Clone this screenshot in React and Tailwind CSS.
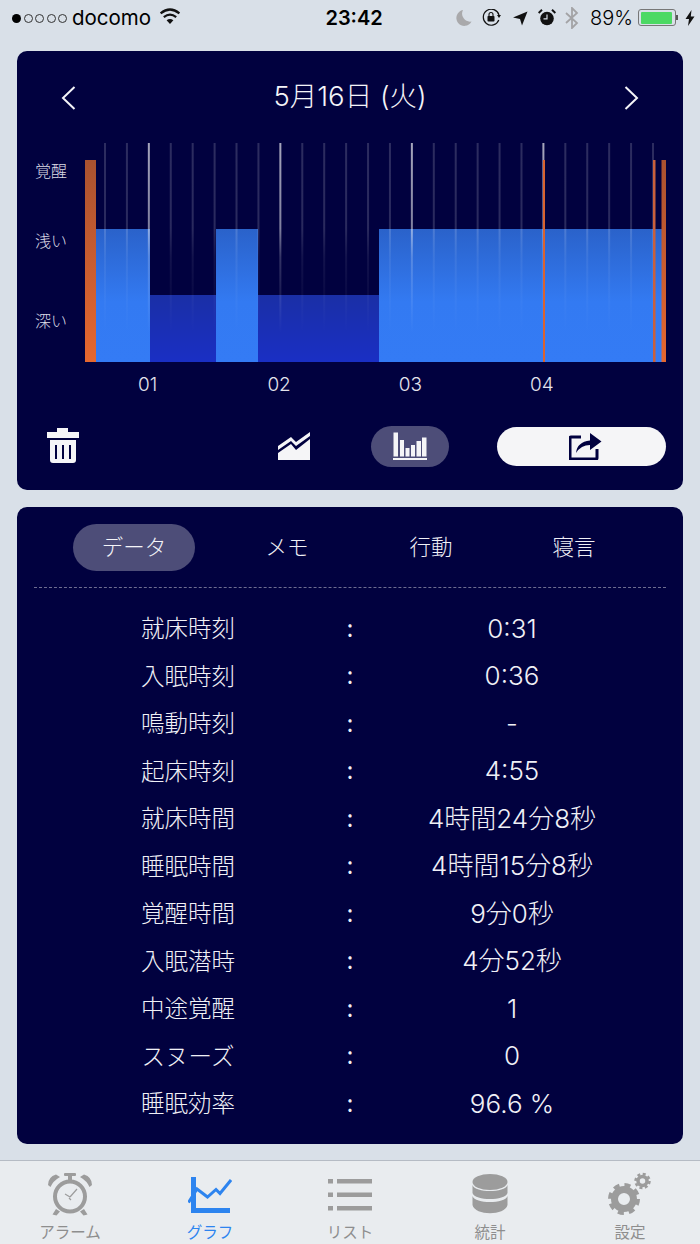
import React from "react";

const FONT = { fontFamily: '"Inter", "Noto Sans CJK JP", sans-serif' };

const ROWS = [
  ["就床時刻", "0:31"],
  ["入眠時刻", "0:36"],
  ["鳴動時刻", "-"],
  ["起床時刻", "4:55"],
  ["就床時間", "4時間24分8秒"],
  ["睡眠時間", "4時間15分8秒"],
  ["覚醒時間", "9分0秒"],
  ["入眠潜時", "4分52秒"],
  ["中途覚醒", "1"],
  ["スヌーズ", "0"],
  ["睡眠効率", "96.6 %"],
];

const GRID_X = Array.from({ length: 26 }, (_, i) => 20 + i * 21.92);

function SleepChart() {
  return (
    <svg width="581" height="219" viewBox="0 0 581 219" className="block">
      <defs>
        <linearGradient id="light" x1="0" y1="86" x2="0" y2="219" gradientUnits="userSpaceOnUse">
          <stop offset="0" stopColor="#2a62ca" />
          <stop offset="0.55" stopColor="#337af2" />
          <stop offset="1" stopColor="#347bf5" />
        </linearGradient>
        <linearGradient id="deep" x1="0" y1="152" x2="0" y2="219" gradientUnits="userSpaceOnUse">
          <stop offset="0" stopColor="#1a2fa6" />
          <stop offset="1" stopColor="#1a2fc4" />
        </linearGradient>
        <linearGradient id="awake" x1="0" y1="17" x2="0" y2="219" gradientUnits="userSpaceOnUse">
          <stop offset="0" stopColor="#aa5230" />
          <stop offset="1" stopColor="#e6672f" />
        </linearGradient>
        <linearGradient id="dim" x1="0" y1="0" x2="0" y2="190" gradientUnits="userSpaceOnUse">
          <stop offset="0" stopColor="#fff" stopOpacity="0.17" />
          <stop offset="0.45" stopColor="#fff" stopOpacity="0.16" />
          <stop offset="0.6" stopColor="#fff" stopOpacity="0.07" />
          <stop offset="1" stopColor="#fff" stopOpacity="0" />
        </linearGradient>
        <linearGradient id="bright" x1="0" y1="0" x2="0" y2="190" gradientUnits="userSpaceOnUse">
          <stop offset="0" stopColor="#fff" stopOpacity="0.65" />
          <stop offset="0.45" stopColor="#fff" stopOpacity="0.5" />
          <stop offset="0.6" stopColor="#fff" stopOpacity="0.2" />
          <stop offset="1" stopColor="#fff" stopOpacity="0" />
        </linearGradient>
      </defs>
      <rect x="11" y="86" width="54" height="133" fill="url(#light)" />
      <rect x="65" y="152" width="66" height="67" fill="url(#deep)" />
      <rect x="131" y="86" width="42" height="133" fill="url(#light)" />
      <rect x="173" y="152" width="121" height="67" fill="url(#deep)" />
      <rect x="294" y="86" width="287" height="133" fill="url(#light)" />
      {GRID_X.map((x, i) => (
        <rect
          key={x}
          x={x - 1}
          y="0"
          width="2"
          height="190"
          fill={i % 6 === 2 ? "url(#bright)" : "url(#dim)"}
        />
      ))}
      <rect x="0" y="17" width="11" height="202" fill="url(#awake)" />
      <rect x="458" y="17" width="2" height="202" fill="#d9632f" />
      <rect x="568" y="17" width="2.5" height="202" fill="#c9603c" />
      <rect x="576.5" y="17" width="4.5" height="202" fill="url(#awake)" />
    </svg>
  );
}

function StatusBar() {
  return (
    <div className="h-[51px] flex items-start pt-[6px] text-black text-[20px] relative">
      <div className="flex items-center h-[24px] pl-[12px] gap-[2.5px]">
        <span className="w-[9px] h-[9px] rounded-full bg-black" />
        {[0, 1, 2, 3].map((i) => (
          <span key={i} className="w-[9px] h-[9px] rounded-full border border-[#333]" />
        ))}
      </div>
      <span className="ml-[5px] leading-[24px] text-[20.5px]">docomo</span>
      <svg width="22" height="17" viewBox="0 0 22 17" className="ml-[8px] mt-[2px]">
        <path d="M11 16 L7.6 12.2 Q11 9.6 14.4 12.2 Z" fill="#111" />
        <path d="M4.8 9.2 Q11 4.2 17.2 9.2" fill="none" stroke="#111" strokeWidth="2.2" />
        <path d="M1.6 5.4 Q11 -2.4 20.4 5.4" fill="none" stroke="#111" strokeWidth="2.2" />
      </svg>
      <span className="ml-[144px] leading-[24px] font-semibold text-[20px] w-[58px] text-center">23:42</span>
      <svg width="17" height="16" viewBox="0 0 17 16" className="ml-[72px] mt-[4px]">
        <path d="M8 0 A8 8 0 1 0 16.5 11.5 A8 8 0 0 1 8 0 Z" fill="#a9a9ab" />
      </svg>
      <svg width="20" height="17" viewBox="0 0 20 17" className="ml-[10px] mt-[3px]">
        <path d="M16.8 11 A8 8 0 1 1 17 6" fill="none" stroke="#111" strokeWidth="1.2" />
        <path d="M15 6 L19 6 L17 9 Z" fill="#111" />
        <rect x="5.5" y="7" width="7" height="5.5" rx="0.8" fill="#111" />
        <path d="M7 7 V5.5 A2 2 0 0 1 11 5.5 V7" fill="none" stroke="#111" strokeWidth="1.1" />
      </svg>
      <svg width="15" height="15" viewBox="0 0 15 15" className="ml-[11px] mt-[5px]">
        <path d="M14.5 0.5 L0 6.5 L7 8 L9 14.5 Z" fill="#111" />
      </svg>
      <svg width="18" height="17" viewBox="0 0 18 17" className="ml-[10px] mt-[3px]">
        <circle cx="9" cy="9.5" r="6.8" fill="#111" />
        <path d="M9 5.5 V9.8 H5.5" fill="none" stroke="#d9e0e8" strokeWidth="1.2" />
        <path d="M0.6 4 L4 0.8 M17.4 4 L14 0.8" stroke="#111" strokeWidth="2" />
      </svg>
      <svg width="14" height="22" viewBox="0 0 14 22" className="ml-[9px] mt-[1px]">
        <path d="M1 6 L12 16 L7 21 V1 L12 6 L1 16" fill="none" stroke="#a3a3a5" strokeWidth="1.8" />
      </svg>
      <span className="ml-[11px] leading-[24px] text-[20px] font-light">89%</span>
      <div className="ml-[5px] mt-[3px] w-[38px] h-[17px] rounded-[3px] border border-[#777] p-[1.5px]">
        <div className="h-full w-[31px] rounded-[1px] bg-[#4cd964]" />
      </div>
      <span className="mt-[9px] w-[2px] h-[5px] bg-[#555]" />
      <svg width="10" height="16" viewBox="0 0 10 16" className="ml-[7px] mt-[4px]">
        <path d="M6.5 0 L0.5 9 H4 L3 16 L9.5 6.5 H5.8 Z" fill="#111" />
      </svg>
    </div>
  );
}

function Card1() {
  return (
    <div className="mx-[17px] h-[439px] rounded-[10px] bg-[#01013f]">
      <div className="h-[92px] flex items-center justify-between px-[44px] pt-[1px] text-[#f4f4f8]">
        <svg width="15" height="24" viewBox="0 0 15 24">
          <path d="M13.5 1 L2 12 L13.5 23" fill="none" stroke="currentColor" strokeWidth="2" />
        </svg>
        <span className="text-[27.5px] font-light mt-[-1px] leading-none">5月16日 (火)</span>
        <svg width="15" height="24" viewBox="0 0 15 24">
          <path d="M1.5 1 L13 12 L1.5 23" fill="none" stroke="currentColor" strokeWidth="2" />
        </svg>
      </div>

      <div className="flex">
        <div className="w-[68px] h-[219px] flex flex-col items-center text-[16px] text-[#dcdce6] font-light leading-[22px]">
          <span className="mt-[17px]">覚醒</span>
          <span className="mt-[48px]">浅い</span>
          <span className="mt-[58px]">深い</span>
        </div>
        <SleepChart />
      </div>

      <div className="flex pl-[65px] mt-[10px] h-[26px] items-center text-[19px] font-light text-[#e4e4ec]">
        {["01", "02", "03", "04"].map((t) => (
          <span key={t} className="w-[131.4px] text-center">
            {t}
          </span>
        ))}
      </div>

      <div className="flex items-center h-[48px] mt-[24px]">
        <svg width="32" height="36" viewBox="0 0 32 36" className="ml-[30px]">
          <path d="M10 0 H21 V4 H32 V10 H0 V4 H10 Z" fill="#f5f5f7" />
          <path
            d="M3 12 H29 V32 Q29 35 26 35 H6 Q3 35 3 32 Z M8 17 V31 H10 V17 Z M15 17 V31 H17 V17 Z M22 17 V31 H24 V17 Z"
            fill="#f5f5f7"
            fillRule="evenodd"
          />
        </svg>
        <svg width="32" height="28" viewBox="0 0 32 28" className="ml-[199px]">
          <path d="M0 14 L13 5 L18 10 L32 0 V4 L18 14 L13 9 L0 18 Z" fill="#f5f5f7" />
          <path d="M0 21 L13 12 L18 18 L32 7 V28 H0 Z" fill="#f5f5f7" />
        </svg>
        <div className="ml-[61px] w-[78px] h-[41px] rounded-full bg-[#4d4d78] flex items-center justify-center">
          <svg width="34" height="28" viewBox="0 0 34 28">
            <g fill="#f5f5f7">
              <rect x="0.5" y="0.5" width="4.5" height="24" />
              <rect x="7" y="8" width="4" height="16.5" />
              <rect x="12.5" y="16" width="4" height="8.5" />
              <rect x="18" y="13" width="4" height="11.5" />
              <rect x="23.5" y="9" width="4.5" height="15.5" />
              <rect x="29" y="5.5" width="4.5" height="19" />
              <rect x="0" y="26" width="34" height="2" />
            </g>
          </svg>
        </div>
        <div className="ml-[48px] w-[169px] h-[39px] rounded-full bg-[#f5f5f7] flex items-center justify-center">
          <svg width="33" height="28" viewBox="0 0 33 28" className="ml-[7px]">
            <path
              d="M12 5 H2 Q1 5 1 6 V26 Q1 27 2 27 H27 Q28 27 28 26 V17"
              fill="none"
              stroke="#01013f"
              strokeWidth="3"
            />
            <path
              d="M7 21 Q8 10 21 8.5 V1 L32.5 9.5 L21 18 V13 Q12 13 7 21 Z"
              fill="#01013f"
            />
          </svg>
        </div>
      </div>
    </div>
  );
}

function Card2() {
  return (
    <div className="mx-[17px] mt-[17px] h-[637px] rounded-[10px] bg-[#01013f] px-[17px] text-[#f0f0f6] font-light">
      <div className="h-[81px] flex items-center text-[21.5px] border-b border-dashed border-[#6d6d90]">
        <div className="ml-[39px] w-[122px] h-[47px] rounded-full bg-[#4d4d78] flex items-center justify-center text-[#f4f4f8]">
          データ
        </div>
        <span className="ml-[62px] w-[60px] text-center">メモ</span>
        <span className="ml-[84px] w-[60px] text-center">行動</span>
        <span className="ml-[83px] w-[60px] text-center">寝言</span>
      </div>
      <div className="pt-[17px]">
        {ROWS.map(([label, value]) => (
          <div
            key={label}
            className="grid grid-cols-[308px_16px_308px] h-[47.5px] items-center text-[23.5px] leading-none"
          >
            <span className="text-center">{label}</span>
            <span className="text-center text-[24px] font-normal">:</span>
            <span className="text-center text-[26px]">{value}</span>
          </div>
        ))}
      </div>
    </div>
  );
}

function AlarmIcon() {
  return (
    <svg width="46" height="43" viewBox="0 0 46 43" fill="#9c9c9c">
      <circle cx="23" cy="23.5" r="15" fill="none" stroke="#9c9c9c" strokeWidth="4" />
      <path d="M1 12 Q1 4 9 1.5 L13 4 Q6 8 3.5 14 Z" />
      <path d="M45 12 Q45 4 37 1.5 L33 4 Q40 8 42.5 14 Z" />
      <rect x="17" y="0" width="12" height="3" rx="1" />
      <rect x="21" y="2" width="4" height="5" />
      <path d="M9 36 L5.5 41.5 L9.5 42.5 L13 38.5 Z M37 36 L40.5 41.5 L36.5 42.5 L33 38.5 Z" />
      <path d="M23 24 L30 16 M23 24 L18 21 M22 25 L24 27" fill="none" stroke="#9c9c9c" strokeWidth="1.2" />
    </svg>
  );
}

function GraphIcon() {
  return (
    <svg width="44" height="37" viewBox="0 0 44 37">
      <path d="M3 0 H8 V31 H42 V36 H3 V24 H3 Z" fill="#2d84ef" />
      <path d="M0.5 25.5 L9 12 L19.5 20 L28 12.5 L32 16.5 L43 3" fill="none" stroke="#2d84ef" strokeWidth="3" />
    </svg>
  );
}

function ListIcon() {
  return (
    <svg width="44" height="32" viewBox="0 0 44 32" fill="#9c9c9c">
      <rect x="0" y="0" width="5" height="4.5" />
      <rect x="9" y="0" width="35" height="4.5" />
      <rect x="0" y="13.5" width="5" height="4.5" />
      <rect x="9" y="13.5" width="35" height="4.5" />
      <rect x="0" y="27" width="5" height="4.5" />
      <rect x="9" y="27" width="35" height="4.5" />
    </svg>
  );
}

function DbIcon() {
  return (
    <svg width="36" height="40" viewBox="0 0 36 40" fill="#9c9c9c">
      <ellipse cx="18" cy="8" rx="17.5" ry="8" />
      <path d="M0.5 11 C3 19 33 19 35.5 11 V19 C33 27 3 27 0.5 19 Z" />
      <path d="M0.5 22 C3 30 33 30 35.5 22 V31 C33 42 3 42 0.5 31 Z" />
    </svg>
  );
}

function GearsIcon() {
  return (
    <svg width="44" height="43" viewBox="0 0 44 43" fill="none">
      <circle cx="16" cy="27" r="9.5" stroke="#9c9c9c" strokeWidth="7" />
      <circle cx="16" cy="27" r="14" stroke="#9c9c9c" strokeWidth="4" strokeDasharray="6 5" />
      <circle cx="34.5" cy="9" r="4.5" stroke="#9c9c9c" strokeWidth="3.5" />
      <circle cx="34.5" cy="9" r="7" stroke="#9c9c9c" strokeWidth="2.5" strokeDasharray="3 2.5" />
    </svg>
  );
}

function TabBar() {
  const tabs = [
    { label: "アラーム", icon: <AlarmIcon />, top: "pt-[12px]" },
    { label: "グラフ", icon: <GraphIcon />, top: "pt-[16px]", active: true },
    { label: "リスト", icon: <ListIcon />, top: "pt-[18px]" },
    { label: "統計", icon: <DbIcon />, top: "pt-[13px]" },
    { label: "設定", icon: <GearsIcon />, top: "pt-[11px]" },
  ];
  return (
    <div className="mt-[16px] h-[84px] bg-[#e9ecef] border-t border-[#b5bbc4] grid grid-cols-5 overflow-hidden">
      {tabs.map((t) => (
        <div key={t.label} className={`relative flex flex-col items-center ${t.top}`}>
          {t.icon}
          <span
            className={`absolute top-[62px] text-[15.5px] leading-[20px] ${
              t.active ? "text-[#2d84ef]" : "text-[#8e8e8e]"
            }`}
          >
            {t.label}
          </span>
        </div>
      ))}
    </div>
  );
}

export default function App() {
  return (
    <div className="w-[700px] h-[1244px] bg-[#d9e0e8] overflow-hidden" style={FONT}>
      <StatusBar />
      <Card1 />
      <Card2 />
      <TabBar />
    </div>
  );
}
